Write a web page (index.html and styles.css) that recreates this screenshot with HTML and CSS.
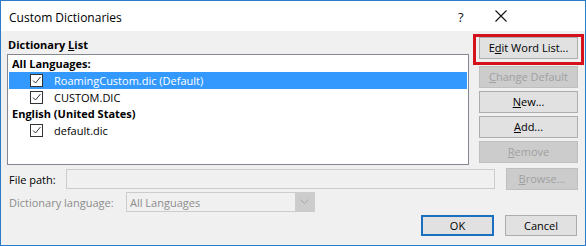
FILE: index.html
```html
<!DOCTYPE html>
<html>
<head>
<meta charset="utf-8">
<link rel="stylesheet" href="styles.css">
</head>
<body>
<div class="window">
  <div class="titlebar">
    <span class="title">Custom Dictionaries</span>
    <span class="help">?</span>
    <span class="close"><svg width="12" height="12" viewBox="0 0 12 12"><path d="M0.5 0.5 L11.5 11.5 M11.5 0.5 L0.5 11.5" stroke="#111" stroke-width="1.1" fill="none"/></svg></span>
  </div>
  <div class="content">
    <div class="top">
      <div class="listarea">
        <div class="label bold">Dictionary <u>L</u>ist</div>
        <div class="listbox">
          <div class="group">All Languages:</div>
          <div class="item selected"><span class="check"><svg width="11" height="11" viewBox="0 0 11 11"><path d="M2 5.5 L4.5 8 L9.5 2" stroke="#333" stroke-width="1" fill="none"/></svg></span>RoamingCustom.dic (Default)</div>
          <div class="item"><span class="check"><svg width="11" height="11" viewBox="0 0 11 11"><path d="M2 5.5 L4.5 8 L9.5 2" stroke="#333" stroke-width="1" fill="none"/></svg></span>CUSTOM.DIC</div>
          <div class="group">English (United States)</div>
          <div class="item"><span class="check"><svg width="11" height="11" viewBox="0 0 11 11"><path d="M2 5.5 L4.5 8 L9.5 2" stroke="#333" stroke-width="1" fill="none"/></svg></span>default.dic</div>
        </div>
      </div>
      <div class="buttons">
        <div class="highlight"><button class="btn">E<u>d</u>it Word List...</button></div>
        <button class="btn disabled"><u>C</u>hange Default</button>
        <button class="btn"><u>N</u>ew...</button>
        <button class="btn"><u>A</u>dd...</button>
        <button class="btn disabled"><u>R</u>emove</button>
      </div>
    </div>
    <div class="row filerow">
      <span class="rowlabel filelabel">File path:</span>
      <div class="field"></div>
      <button class="btn small disabled"><u>B</u>rowse...</button>
    </div>
    <div class="row langrow">
      <span class="rowlabel langlabel grey">Dictionary language:</span>
      <div class="select"><span class="seltext">All Languages</span><span class="drop"><svg width="9" height="6" viewBox="0 0 9 6"><path d="M0.5 0.5 L4.5 4.5 L8.5 0.5" stroke="#a8a8a8" stroke-width="1" fill="none"/></svg></span></div>
    </div>
    <div class="row okrow">
      <button class="btn ok">OK</button>
      <button class="btn small">Cancel</button>
    </div>
  </div>
</div>
</body>
</html>
```

FILE: styles.css
```css
* { box-sizing: border-box; }
html, body { margin: 0; padding: 0; }
body {
  width: 586px;
  height: 246px;
  overflow: hidden;
  font-family: "Open Sans", "Noto Sans", sans-serif;
  font-size: 11px;
  color: #000;
  background: #fff;
}
.window {
  width: 586px;
  height: 246px;
  border: 1px solid #2b7cc6;
  background: #f0f0f0;
  display: flex;
  flex-direction: column;
}
.titlebar {
  height: 30px;
  background: #fff;
  display: flex;
  align-items: center;
  padding-left: 8px;
  flex-shrink: 0;
}
.title {
  font-size: 12px;
  flex: 1;
  margin-top: 2px;
}
.help {
  font-size: 13px;
  width: 8px;
  margin-right: 29px;
  margin-top: 1px;
  color: #111;
}
.close {
  width: 12px;
  height: 12px;
  margin-right: 78px;
  display: flex;
}
.content {
  flex: 1;
  padding: 0 7px 0 6px;
  display: flex;
  flex-direction: column;
}
.top {
  display: flex;
  height: 134px;
}
.listarea {
  width: 462px;
  display: flex;
  flex-direction: column;
}
.label {
  height: 16px;
  line-height: 16px;
  margin-top: 6px;
  margin-left: 1px;
  margin-bottom: 1px;
}
.bold { font-weight: 700; }
.listbox {
  height: 111px;
  background: #fff;
  border: 1px solid #828790;
  padding: 1px;
}
.group {
  height: 16px;
  line-height: 16px;
  font-weight: 700;
  padding-left: 3px;
}
.item {
  height: 17px;
  line-height: 17px;
  display: flex;
  align-items: center;
  padding-left: 21px;
}
.item.selected {
  background: #3399ff;
  color: #fff;
}
.check {
  width: 13px;
  height: 13px;
  border: 1px solid #333;
  background: #fff;
  margin-right: 11px;
  display: flex;
  align-items: center;
  justify-content: center;
}
.buttons {
  margin-left: auto;
  width: 99px;
  display: flex;
  flex-direction: column;
  padding-top: 6px;
  gap: 3px;
}
.highlight {
  position: relative;
  margin-bottom: 4px;
}
.highlight::after {
  content: "";
  position: absolute;
  left: -6px;
  right: -6px;
  top: -3px;
  bottom: -6px;
  border: 3px solid #d5121c;
}
.btn {
  font-family: inherit;
  font-size: 11px;
  height: 22px;
  width: 99px;
  padding: 0;
  margin: 0;
  background: #e1e1e1;
  border: 1px solid #adadad;
  color: #000;
  line-height: 18px;
  flex-shrink: 0;
}
.btn.disabled {
  background: #cccccc;
  border-color: #bfbfbf;
  color: #a0a0a0;
}
.btn.small { width: 72px; }
.btn.ok {
  width: 73px;
  border: 2px solid #1a6fc0;
}
.row {
  display: flex;
  align-items: center;
}
.filerow {
  margin-top: 3px;
  height: 22px;
}
.rowlabel {
  margin-left: 2px;
  white-space: nowrap;
  flex-shrink: 0;
}
.filelabel { width: 57px; }
.langlabel { width: 117px; }
.grey { color: #8d8d8d; }
.field {
  flex: 1;
  height: 20px;
  border: 1px solid #cccccc;
  background: #f0f0f0;
  margin-right: 11px;
}
.langrow {
  margin-top: 2px;
  height: 20px;
}
.select {
  width: 189px;
  height: 20px;
  border: 1px solid #cccccc;
  background: #f0f0f0;
  display: flex;
  align-items: center;
}
.seltext {
  flex: 1;
  padding-left: 3px;
  color: #8d8d8d;
}
.drop {
  width: 19px;
  height: 18px;
  background: #cccccc;
  display: flex;
  align-items: center;
  justify-content: center;
}
.okrow {
  justify-content: flex-end;
  gap: 11px;
  margin-top: 3px;
  padding-right: 1px;
}
.okrow .btn { height: 21px; }
```
